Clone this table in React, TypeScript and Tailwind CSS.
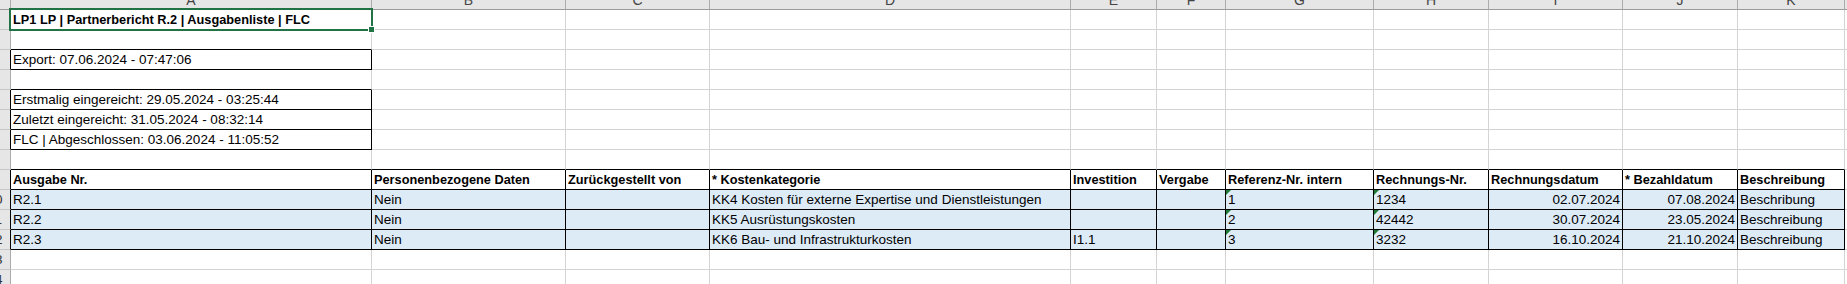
import clsx from 'clsx';

type Col = { key: string; w: string };

const COLS: Col[] = [
  { key: 'A', w: 'w-[361px]' },
  { key: 'B', w: 'w-[194px]' },
  { key: 'C', w: 'w-[144px]' },
  { key: 'D', w: 'w-[361px]' },
  { key: 'E', w: 'w-[86px]' },
  { key: 'F', w: 'w-[69px]' },
  { key: 'G', w: 'w-[148px]' },
  { key: 'H', w: 'w-[115px]' },
  { key: 'I', w: 'w-[134px]' },
  { key: 'J', w: 'w-[115px]' },
  { key: 'K', w: 'w-[107px]' },
];

type Row = {
  cells: string[];
  bordered?: boolean[];
  bold?: boolean;
  fill?: boolean;
};

const ALL = COLS.map(() => true);
const ONLY_A = COLS.map((_, i) => i === 0);
const NONE = COLS.map(() => false);

const HEADERS = [
  'Ausgabe Nr.',
  'Personenbezogene Daten',
  'Zurückgestellt von',
  '* Kostenkategorie',
  'Investition',
  'Vergabe',
  'Referenz-Nr. intern',
  'Rechnungs-Nr.',
  'Rechnungsdatum',
  '* Bezahldatum',
  'Beschreibung',
];

const ROWS: Row[] = [
  { cells: ['LP1 LP | Partnerbericht R.2 | Ausgabenliste | FLC'], bold: true },
  { cells: [] },
  { cells: ['Export: 07.06.2024 - 07:47:06'], bordered: ONLY_A },
  { cells: [] },
  { cells: ['Erstmalig eingereicht: 29.05.2024 - 03:25:44'], bordered: ONLY_A },
  { cells: ['Zuletzt eingereicht: 31.05.2024 - 08:32:14'], bordered: ONLY_A },
  { cells: ['FLC | Abgeschlossen: 03.06.2024 - 11:05:52'], bordered: ONLY_A },
  { cells: [] },
  { cells: HEADERS, bordered: ALL, bold: true },
  {
    cells: ['R2.1', 'Nein', '', 'KK4 Kosten für externe Expertise und Dienstleistungen', '', '', '1', '1234', '02.07.2024', '07.08.2024', 'Beschribung'],
    bordered: ALL,
    fill: true,
  },
  {
    cells: ['R2.2', 'Nein', '', 'KK5 Ausrüstungskosten', '', '', '2', '42442', '30.07.2024', '23.05.2024', 'Beschreibung'],
    bordered: ALL,
    fill: true,
  },
  {
    cells: ['R2.3', 'Nein', '', 'KK6 Bau- und Infrastrukturkosten', 'I1.1', '', '3', '3232', '16.10.2024', '21.10.2024', 'Beschreibung'],
    bordered: ALL,
    fill: true,
  },
  { cells: [] },
  { cells: [] },
];

const isBordered = (r: number, c: number) => {
  const row = ROWS[r];
  if (!row) return false;
  return (row.bordered ?? NONE)[c] ?? false;
};

function ColumnHeader() {
  return (
    <div className="flex h-[10px]">
      <div className="h-[10px] w-[11px] shrink-0 border-r border-b border-r-[#ababab] border-b-[#9b9b9b] bg-[#e6e6e6]" />
      {COLS.map((col) => (
        <div
          key={col.key}
          className={clsx(
            'flex h-[10px] shrink-0 items-end justify-center overflow-hidden border-r border-b border-r-[#ababab] border-b-[#9b9b9b] bg-[#e6e6e6] pb-[2px]',
            col.w
          )}
        >
          <span className="text-[14px] leading-none text-[#444]">{col.key}</span>
        </div>
      ))}
      <div className="h-[10px] min-w-0 flex-1 border-b border-b-[#9b9b9b] bg-[#e6e6e6]" />
    </div>
  );
}

function SheetRow({ row, r }: { row: Row; r: number }) {
  return (
    <div className="flex h-[20px]">
      {/* row header, cropped at the left edge of the window */}
      <div
        className={clsx(
          'h-[20px] w-[11px] shrink-0 overflow-hidden border-r border-b border-b-[#c6c6c6] bg-[#e6e6e6]',
          isBordered(r, 0) ? 'border-r-black' : 'border-r-[#ababab]'
        )}
      >
        <div className="ml-[-21px] w-[32px] text-center text-[13.5px] leading-[20px] text-[#333]">{r + 1}</div>
      </div>
      {COLS.map((col, c) => {
        const value = row.cells[c] ?? '';
        const rightBlack = isBordered(r, c) || isBordered(r, c + 1);
        const bottomBlack = isBordered(r, c) || isBordered(r + 1, c);
        const right = r >= 9 && r <= 11 && (c === 8 || c === 9);
        const flag = r >= 9 && r <= 11 && (c === 6 || c === 7);
        return (
          <div
            key={col.key}
            className={clsx(
              'relative h-[20px] shrink-0 overflow-hidden whitespace-nowrap border-r border-b px-[2px] leading-[20px]',
              col.w,
              rightBlack ? 'border-r-black' : 'border-r-[#d4d4d4]',
              bottomBlack ? 'border-b-black' : 'border-b-[#d4d4d4]',
              row.fill && 'bg-[#ddebf7]',
              row.bold && 'text-[12.75px] font-bold',
              right && 'text-right'
            )}
          >
            {flag && (
              <span className="absolute top-0 left-0 h-0 w-0 border-t-[5px] border-r-[5px] border-t-[#1e7b34] border-r-transparent" />
            )}
            {value}
          </div>
        );
      })}
      <div className="h-[20px] min-w-0 flex-1 border-b border-b-[#d4d4d4]" />
    </div>
  );
}

export default function App() {
  return (
    <div className="relative h-[284px] w-[1847px] overflow-hidden bg-white font-['Liberation_Sans',Arial,sans-serif] text-[13.5px] text-black">
      <ColumnHeader />
      {ROWS.map((row, r) => (
        <SheetRow key={r} row={row} r={r} />
      ))}

      {/* active cell A1 */}
      <div className="pointer-events-none absolute top-[8px] left-[9px] h-[23px] w-[364px] border-2 border-[#217346]" />
      <div className="pointer-events-none absolute top-[26px] left-[368px] h-[7px] w-[7px] border border-white bg-[#217346]" />
    </div>
  );
}
